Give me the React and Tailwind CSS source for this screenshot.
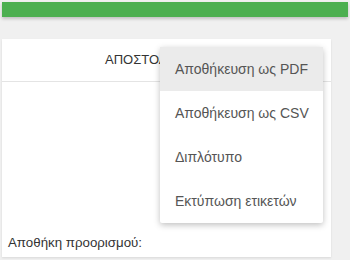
import { useState } from 'react'

const items = ['Αποθήκευση ως PDF', 'Αποθήκευση ως CSV', 'Διπλότυπο', 'Εκτύπωση ετικετών']

export default function App() {
    const [active, setActive] = useState(0)

    return (
        <div className="w-[350px] h-[260px] overflow-hidden bg-[#f0f0f0] font-['Liberation_Sans',Arial,sans-serif]">
            {/* Top bar */}
            <div className="pt-[2px] px-[2px]">
                <div className="h-[15px] bg-[#4caf50] shadow-[0_2px_3px_rgba(0,0,0,0.2)]" />
            </div>

            {/* Card */}
            <div className="relative ml-[2px] mt-[22px] w-[329px] h-[218px] bg-white shadow-[0_1px_2px_rgba(0,0,0,0.1)]">
                <div className="h-[43px] flex items-center border-b border-[#e4e4e4]">
                    <span className="ml-[103px] text-[13px] text-[#333]">ΑΠΟΣΤΟΛΗ</span>
                </div>
                <div className="h-[174px] flex items-end pb-[3px] pl-[6px]">
                    <span className="text-[13.3px] text-[#333]">Αποθήκη προορισμού:</span>
                </div>

                {/* Dropdown menu */}
                <div className="absolute left-[158px] top-[8px] w-[163px] bg-white rounded-[2px] shadow-[0_2px_6px_rgba(0,0,0,0.25)]">
                    {items.map((label, i) => (
                        <div
                            key={label}
                            onMouseEnter={() => setActive(i)}
                            className={`h-[44px] flex items-center pl-[15px] text-[14px] text-[#555] ${active === i ? 'bg-[#ebebeb]' : ''}`}
                        >
                            {label}
                        </div>
                    ))}
                </div>
            </div>
        </div>
    )
}
